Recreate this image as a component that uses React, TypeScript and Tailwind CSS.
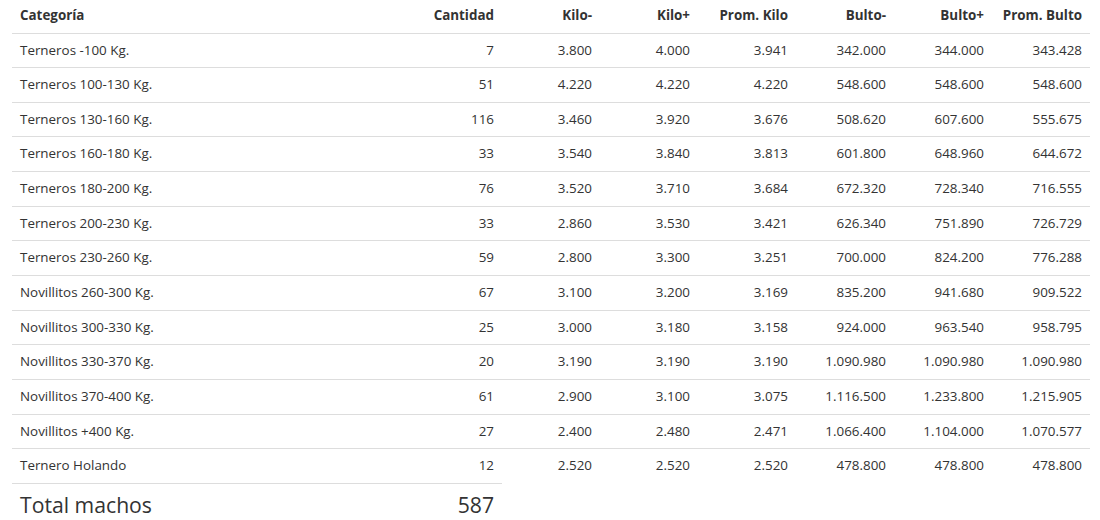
const rows: [string, number, string, string, string, string, string, string][] = [
  ["Terneros -100 Kg.", 7, "3.800", "4.000", "3.941", "342.000", "344.000", "343.428"],
  ["Terneros 100-130 Kg.", 51, "4.220", "4.220", "4.220", "548.600", "548.600", "548.600"],
  ["Terneros 130-160 Kg.", 116, "3.460", "3.920", "3.676", "508.620", "607.600", "555.675"],
  ["Terneros 160-180 Kg.", 33, "3.540", "3.840", "3.813", "601.800", "648.960", "644.672"],
  ["Terneros 180-200 Kg.", 76, "3.520", "3.710", "3.684", "672.320", "728.340", "716.555"],
  ["Terneros 200-230 Kg.", 33, "2.860", "3.530", "3.421", "626.340", "751.890", "726.729"],
  ["Terneros 230-260 Kg.", 59, "2.800", "3.300", "3.251", "700.000", "824.200", "776.288"],
  ["Novillitos 260-300 Kg.", 67, "3.100", "3.200", "3.169", "835.200", "941.680", "909.522"],
  ["Novillitos 300-330 Kg.", 25, "3.000", "3.180", "3.158", "924.000", "963.540", "958.795"],
  ["Novillitos 330-370 Kg.", 20, "3.190", "3.190", "3.190", "1.090.980", "1.090.980", "1.090.980"],
  ["Novillitos 370-400 Kg.", 61, "2.900", "3.100", "3.075", "1.116.500", "1.233.800", "1.215.905"],
  ["Novillitos +400 Kg.", 27, "2.400", "2.480", "2.471", "1.066.400", "1.104.000", "1.070.577"],
  ["Ternero Holando", 12, "2.520", "2.520", "2.520", "478.800", "478.800", "478.800"],
];

const headers = ["Kilo-", "Kilo+", "Prom. Kilo", "Bulto-", "Bulto+", "Prom. Bulto"];

export default function App() {
  return (
    <div className="w-[1100px] h-[520px] overflow-hidden bg-white text-[#333] text-[13.4px] font-['Open_Sans',sans-serif]">
      <div className="ml-[12px] w-[1078px]">
        <table className="w-full table-fixed border-collapse">
          <colgroup>
            <col className="w-[392px]" />
            <col className="w-[98px]" />
            {headers.map((h) => (
              <col key={h} className="w-[98px]" />
            ))}
          </colgroup>
          <thead>
            <tr>
              <th className="text-left font-bold px-2 pt-[6px] pb-[8.5px] leading-[18px]">Categoría</th>
              <th className="text-right font-bold px-2 pt-[6px] pb-[8.5px] leading-[18px]">Cantidad</th>
              {headers.map((h) => (
                <th key={h} className="text-right font-bold px-2 pt-[6px] pb-[8.5px] leading-[18px]">
                  {h}
                </th>
              ))}
            </tr>
          </thead>
          <tbody>
            {rows.map((r) => (
              <tr key={r[0]} className="border-t border-[#ddd]">
                <td className="text-left px-2 py-2 leading-[17.65px]">{r[0]}</td>
                {r.slice(1).map((v, i) => (
                  <td key={i} className="text-right px-2 py-2 leading-[17.65px]">
                    {v}
                  </td>
                ))}
              </tr>
            ))}
          </tbody>
        </table>

        <table className="w-[490px] table-fixed border-collapse">
          <colgroup>
            <col className="w-[392px]" />
            <col className="w-[98px]" />
          </colgroup>
          <tbody>
            <tr className="border-t border-[#ddd]">
              <td className="text-left px-2 pt-[9px] pb-2 text-[21.2px] leading-[1.1]">Total machos</td>
              <td className="text-right px-2 pt-[9px] pb-2 text-[21.2px] leading-[1.1]">587</td>
            </tr>
          </tbody>
        </table>
      </div>
    </div>
  );
}
